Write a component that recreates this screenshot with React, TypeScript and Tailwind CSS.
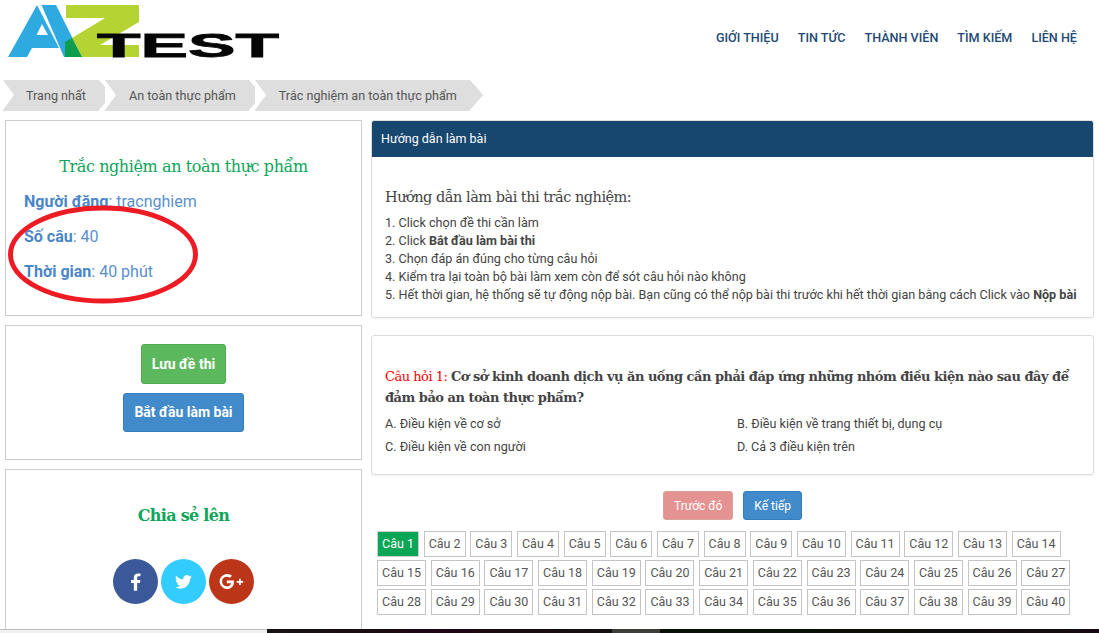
const num = Array.from({ length: 40 }, (_, i) => i + 1);
const slab = { fontFamily: '"DejaVu Serif", serif' };

function Logo() {
  return (
    <svg width="280" height="70" viewBox="0 0 280 70" className="block">
      <path fillRule="evenodd" d="M8 57 37 5 59 48 32 48 27 57ZM36.500 35 42 24 48 35Z" fill="#2eaae1" />
      <polygon points="41.500,5 56,5 82,57 64,57" fill="#2eaae1" />
      <polygon points="66,5 139,5 139,22 100,45 139,45 139,57 82,57 72,38 105,18 66,18" fill="#b5d433" />
      <polygon points="65,42 72,38 82,57 65,57" fill="#0e9c4e" />
      <text x="97" y="57" textLength="182" lengthAdjust="spacingAndGlyphs" fontFamily="Liberation Sans" fontWeight="700" fontSize="34" fill="#050505" stroke="#050505" strokeWidth="0.8">TEST</text>
    </svg>
  );
}

function Crumb({ label, first }: { label: string; first?: boolean }) {
  return (
    <div className={`relative flex h-[31px] items-center bg-[#dedede] pr-[13px] pt-px text-[12.600px] text-[#555] ${first ? "pl-[23px]" : "pl-[24px]"}`}>
      <span className="absolute left-0 top-0 h-0 w-0 border-y-[15.500px] border-l-[11px] border-y-transparent border-l-white" />
      {label}
      <span className="absolute left-full top-0 h-0 w-0 border-y-[15.500px] border-l-[13px] border-y-transparent border-l-[#dedede]" />
    </div>
  );
}

export default function App() {
  return (
    <div className="flex h-[633px] w-[1099px] flex-col overflow-hidden bg-white text-[#444]" style={{ fontFamily: 'Roboto, sans-serif' }}>
      <header className="flex h-[80px] shrink-0 items-start justify-between">
        <Logo />
        <nav className="mr-[22px] mt-[30px] flex gap-[19px] text-[12.600px] font-medium leading-4 text-[#1e4a75]">
          <span>GIỚI THIỆU</span>
          <span>TIN TỨC</span>
          <span>THÀNH VIÊN</span>
          <span>TÌM KIẾM</span>
          <span>LIÊN HỆ</span>
        </nav>
      </header>
      <div className="flex h-[40px] shrink-0 items-start gap-[6px] pl-[3px]">
        <Crumb first label="Trang nhất" />
        <Crumb label="An toàn thực phẩm" />
        <Crumb label="Trắc nghiệm an toàn thực phẩm" />
      </div>
      <div className="flex h-[509px] shrink-0 gap-[9px] px-[5px]">
        <aside className="flex w-[357px] shrink-0 flex-col gap-[9px]">
          <section className="relative h-[196px] border border-[#ccc] px-[18px] pt-[36px]">
            <h2 className="text-center text-[16px] leading-5 tracking-[-0.4px] text-[#0ea55a]" style={slab}>Trắc nghiệm an toàn thực phẩm</h2>
            <div className="mt-[15px] flex flex-col gap-[15px] text-[16px] leading-5 text-[#5b8fce]">
              <p><b className="font-bold text-[#4a86c8]">Người đăng</b>: tracnghiem</p>
              <p><b className="font-bold text-[#4a86c8]">Số câu</b>: 40</p>
              <p><b className="font-bold text-[#4a86c8]">Thời gian</b>: 40 phút</p>
            </div>
            <svg className="absolute left-[2px] top-[84px]" width="190" height="100" viewBox="0 0 190 100">
              <ellipse cx="95" cy="49.500" rx="92.500" ry="46.500" fill="none" stroke="#ed1c24" strokeWidth="5" />
            </svg>
          </section>
          <section className="flex h-[135px] shrink-0 flex-col items-center gap-[9px] border border-[#ccc] pt-[18px]">
            <button className="h-[40px] rounded-[3px] border border-[#4cae4c] bg-[#5cb85c] px-[10px] text-[14px] font-bold text-white">Lưu đề thi</button>
            <button className="h-[39px] rounded-[3px] border border-[#357ebd] bg-[#428bca] px-[10px] text-[14px] font-bold text-white">Bắt đầu làm bài</button>
          </section>
          <section className="flex h-[160px] shrink-0 flex-col items-center border border-b-0 border-[#ccc] pt-[34px]">
            <h2 className="text-[16px] font-bold leading-6 tracking-[-0.7px] text-[#0ea55a]" style={slab}>Chia sẻ lên</h2>
            <div className="mt-[31px] flex gap-[3px]">
              <a className="flex h-[45px] w-[45px] items-center justify-center rounded-full bg-[#3b5998]">
                <svg width="10" height="18" viewBox="0 0 12 21"><path d="M3.400 21V11.600H0V8h3.400V5.200C3.400 1.900 5.400.2 8.300.2c1.400 0 2.600.1 3 .2v3.300h-2c-1.600 0-1.900.8-1.900 1.900V8h3.800l-.5 3.600H7.400V21z" fill="#fff" /></svg>
              </a>
              <a className="flex h-[45px] w-[45px] items-center justify-center rounded-full bg-[#33ccff]">
                <svg width="17" height="14" viewBox="0 0 24 20"><path d="M24 2.400c-.9.4-1.800.7-2.800.8 1-.6 1.800-1.600 2.200-2.700-1 .6-2 1-3.100 1.200A4.900 4.900 0 0 0 11.900 6.200 14 14 0 0 1 1.700.9a4.900 4.900 0 0 0 1.500 6.600c-.8 0-1.600-.2-2.200-.6v.1c0 2.400 1.700 4.400 3.900 4.800-.7.2-1.500.2-2.200.1.600 2 2.400 3.400 4.600 3.400A9.900 9.900 0 0 1 0 17.300 14 14 0 0 0 7.500 19.500c9.100 0 14-7.500 14-14v-.6c1-.7 1.800-1.600 2.500-2.500z" fill="#fff" /></svg>
              </a>
              <a className="flex h-[45px] w-[45px] items-center justify-center rounded-full bg-[#bb3618]">
                <svg width="25" height="15" viewBox="0 0 26 16">
                  <path d="M8 6.800v3h4.600C12.200 11.900 10.400 13.100 8 13.100A5.100 5.100 0 0 1 8 2.900c1.300 0 2.400.4 3.300 1.200l2.200-2.200A8 8 0 1 0 8 16c4.600 0 7.700-3.200 7.700-7.800 0-.5 0-.9-.1-1.400z" fill="#fff" />
                  <path d="M21 5h2v2.400h2.400v2H23v2.400h-2V9.400h-2.400v-2H21z" fill="#fff" />
                </svg>
              </a>
            </div>
          </section>
        </aside>
        <main className="min-w-0 flex-1">
          <section className="h-[198px] overflow-hidden rounded-[3px] border border-[#ddd] shadow-[0_1px_1px_rgba(0,0,0,0.05)]">
            <div className="flex h-[36px] items-center bg-[#17466f] px-[9px] text-[12.500px] text-white">Hướng dẫn làm bài</div>
            <div className="px-[13px] pt-[30px] text-[12.600px] leading-[18px]">
              <h3 className="mb-[7px] text-[14.500px] leading-5 tracking-[-0.5px] text-[#444]" style={slab}>Hướng dẫn làm bài thi trắc nghiệm:</h3>
              <p>1. Click chọn đề thi cần làm</p>
              <p>2. Click <b>Bắt đầu làm bài thi</b></p>
              <p>3. Chọn đáp án đúng cho từng câu hỏi</p>
              <p>4. Kiểm tra lại toàn bộ bài làm xem còn để sót câu hỏi nào không</p>
              <p>5. Hết thời gian, hệ thống sẽ tự động nộp bài. Bạn cũng có thể nộp bài thi trước khi hết thời gian bằng cách Click vào <b>Nộp bài</b></p>
            </div>
          </section>
          <section className="mt-[17px] h-[140px] rounded-[3px] border border-[#ddd] px-[13px] pt-[30px] shadow-[0_1px_1px_rgba(0,0,0,0.05)]">
            <h3 className="text-[13px] font-bold leading-[21px] tracking-[-0.5px] text-[#444]" style={slab}><span className="font-normal text-[#f00]">Câu hỏi 1: </span>Cơ sở kinh doanh dịch vụ ăn uống cần phải đáp ứng những nhóm điều kiện nào sau đây để đảm bảo an toàn thực phẩm?</h3>
            <div className="mt-[7px] grid grid-cols-[352px_1fr] gap-y-[5px] text-[12.600px] leading-[18px]">
              <p>A. Điều kiện về cơ sở</p>
              <p>B. Điều kiện về trang thiết bị, dụng cụ</p>
              <p>C. Điều kiện về con người</p>
              <p>D. Cả 3 điều kiện trên</p>
            </div>
          </section>
          <div className="mt-[16px] flex justify-center gap-[10px]">
            <button className="h-[29px] rounded-[3px] border border-[#d9a09c] bg-[#e49392] px-[10px] text-[12px] text-white">Trước đó</button>
            <button className="h-[29px] rounded-[3px] border border-[#357ebd] bg-[#428bca] px-[10px] text-[12px] text-white">Kế tiếp</button>
          </div>
          <div className="mt-[11px] flex flex-wrap gap-x-[4.700px] gap-y-[3px] pl-[6px] pr-[20px] text-[12.500px]">
            {num.map((n) => (
              <span key={n} className={`flex h-[26px] items-center justify-center border px-[4px] ${n === 1 ? "border-[#ccc] bg-[#0ba757] text-white" : "border-[#c4c4c4] bg-white text-[#555]"}`}>Câu {n}</span>
            ))}
          </div>
        </main>
      </div>
      <div className="flex h-[4px] shrink-0">
        <div className="w-[267px] border-t border-[#c0c0c0] bg-[#f0f0f0]" />
        <div className="w-[345px] bg-gradient-to-r from-[#161314] via-[#1d0612] to-[#14100f]" />
        <div className="w-[48px] bg-[#3c3c38]" />
        <div className="flex-1 bg-gradient-to-r from-[#0a0f08] via-[#0a0d08] to-[#160a12]" />
      </div>
    </div>
  );
}
